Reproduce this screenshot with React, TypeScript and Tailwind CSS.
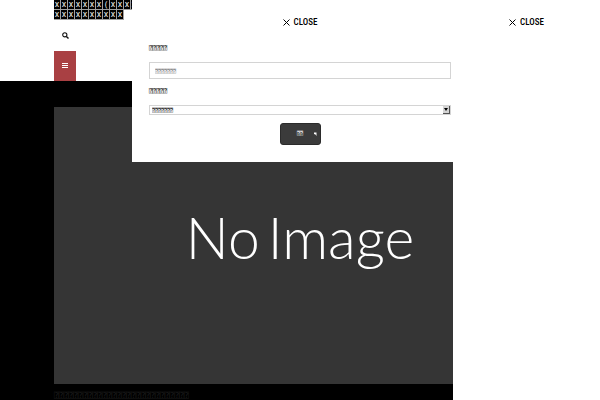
import React from 'react';

const titleRows = ['XXXXXXX(XXXXX', 'XXXXXXXXXX'];

const CloseButton: React.FC = () => (
    <button type="button" className="flex items-center gap-1 text-[9px] leading-3 font-medium text-black font-['Roboto_Condensed','Liberation_Sans',sans-serif]">
        <svg viewBox="0 0 7 7" className="size-[7px]" stroke="currentColor" strokeWidth="1" fill="none">
            <path d="M0.5 0.5L6.5 6.5M6.5 0.5L0.5 6.5" />
        </svg>
        CLOSE
    </button>
);

const SearchPanel: React.FC = () => (
    <form className="absolute inset-x-[132px] top-0 flex h-[162px] flex-col bg-white px-[17px] pt-4 font-['DejaVu_Sans_Mono',monospace]" onSubmit={(e) => e.preventDefault()}>
        <div className="flex justify-center">
            <CloseButton />
        </div>

        <label htmlFor="keyword" className="mt-4 text-[6px] leading-2 text-black">⍰⍰⍰⍰⍰</label>
        <input
            id="keyword"
            type="text"
            placeholder="⍰⍰⍰⍰⍰⍰⍰"
            className="mt-[10px] h-[17px] w-full border border-neutral-300 px-[5px] text-[5px] text-black placeholder:text-neutral-500"
        />

        <label htmlFor="category" className="mt-2 text-[6px] leading-2 text-black">⍰⍰⍰⍰⍰</label>
        <div className="relative mt-[10px] h-[10px]">
            <select id="category" className="block h-full w-full appearance-none border border-neutral-300 bg-white px-0.5 text-[5px] leading-2 text-black">
                <option>⍰⍰⍰⍰⍰⍰⍰</option>
            </select>
            {/* Select arrow */}
            <span className="pointer-events-none absolute inset-y-px right-px flex w-[7px] items-center justify-center border-r border-b border-neutral-600 bg-neutral-300">
                <svg viewBox="0 0 4 3" className="h-[3px] w-1">
                    <path d="M0 0H4L2 3Z" fill="#000" />
                </svg>
            </span>
        </div>

        <button type="submit" className="relative mt-2 h-[22px] w-[41px] self-center rounded-[3px] border border-[#2b2b2b] bg-[#3b3b3b] text-[5px] text-white">
            ⍰⍰
            <svg viewBox="0 0 3 4" className="absolute top-2 right-[3px] h-1 w-[3px]">
                <path d="M0 0.5H2.5V4L1.5 2.5L0 2Z" fill="#fff" />
            </svg>
        </button>
    </form>
);

const App: React.FC = () => {
    return (
        <div className="relative flex h-screen overflow-hidden bg-white">
            <main className="flex min-w-0 flex-1 flex-col">
                <header className="h-[81px] shrink-0 pl-[54px]">
                    <h1 className="h-5 text-[8px] leading-[10px] text-white font-['Roboto_Condensed','Liberation_Sans',sans-serif]">
                        {titleRows.map((row) => (
                            <span key={row} className="flex h-[10px]">
                                {row.split('').map((char, i) => (
                                    <span key={i} className="w-[7px] shrink-0 border-r border-b border-neutral-400 bg-black text-center">{char}</span>
                                ))}
                            </span>
                        ))}
                    </h1>
                    <button type="button" aria-label="Search" className="mt-3 flex h-[7px] w-[22px] justify-center">
                        <svg viewBox="0 0 7 7" className="size-[7px]" stroke="#111" fill="none">
                            <circle cx="2.8" cy="2.8" r="2.1" strokeWidth="1.1" />
                            <path d="M4.4 4.4L6.5 6.5" strokeWidth="1.4" />
                        </svg>
                    </button>
                    <button type="button" aria-label="Menu" className="mt-3 flex h-[30px] w-[22px] items-center justify-center bg-[#a94043]">
                        <svg viewBox="0 0 6 6" className="size-[6px]" stroke="#fff" strokeWidth="1">
                            <path d="M0 0.5H6M0 2.5H6M0 4.5H6" />
                        </svg>
                    </button>
                </header>

                <article className="flex-1 bg-black pt-[26px] pl-[54px]">
                    {/* Image placeholder */}
                    <div className="flex aspect-[399/277] items-center justify-center gap-2 bg-[#353535] pb-4 pl-[93px] text-[57px] leading-none font-light whitespace-nowrap text-white font-['Lato',sans-serif]">
                        <span>No</span>
                        <span>Image</span>
                    </div>
                    <p className="mt-2 text-[8px] leading-2 text-[#1c1c1c] font-['DejaVu_Sans_Mono',monospace]">⍰⍰⍰⍰⍰⍰⍰⍰⍰⍰⍰⍰⍰⍰⍰⍰⍰⍰⍰⍰⍰⍰⍰⍰⍰⍰⍰⍰</p>
                </article>
            </main>

            <SearchPanel />

            <aside className="relative flex w-[147px] shrink-0 items-start justify-center bg-white pt-4">
                <CloseButton />
            </aside>
        </div>
    );
};

export default App;
